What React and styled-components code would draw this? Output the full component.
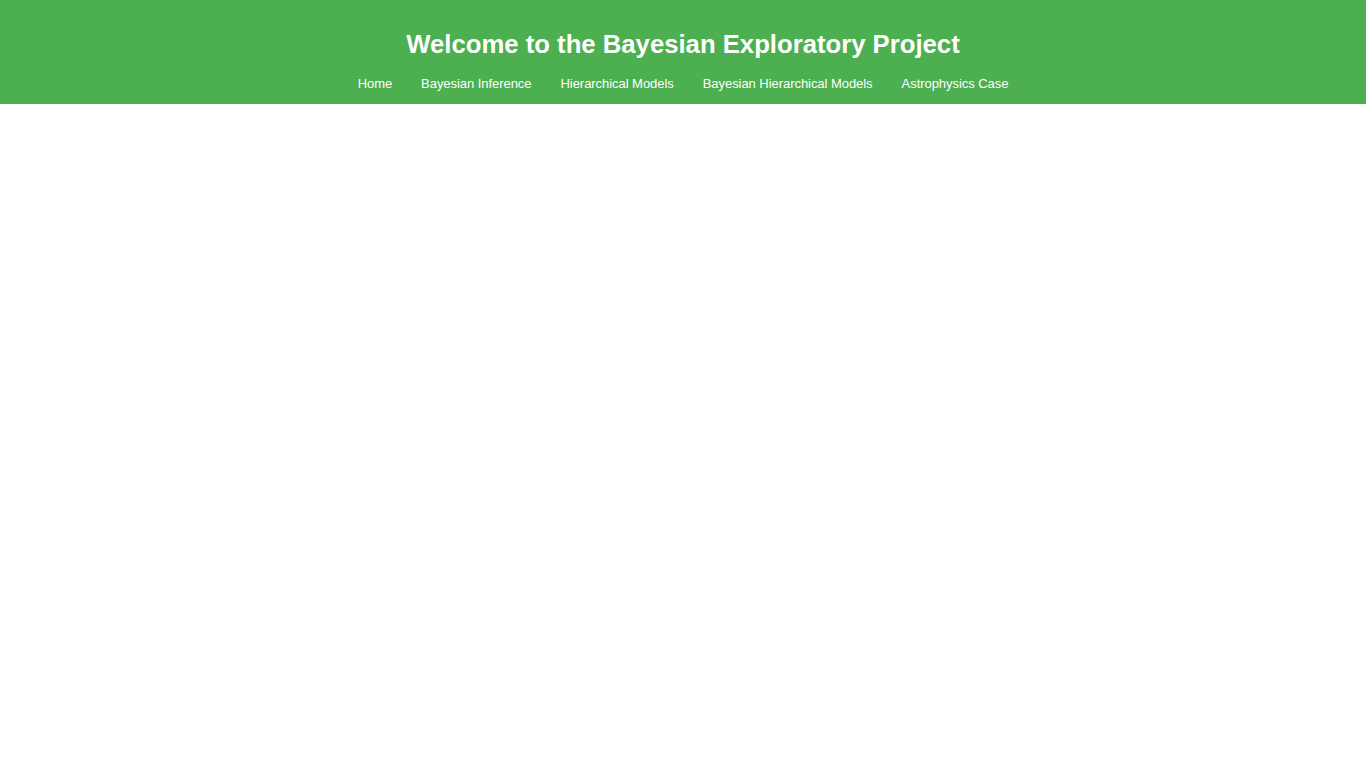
import React from "react";
import styled, { createGlobalStyle } from "styled-components";

const GlobalStyle = createGlobalStyle`
  body {
    margin: 0;
    font-family: "Liberation Sans", Arial, sans-serif;
    background: #fff;
  }
`;

const links = [
  "Home",
  "Bayesian Inference",
  "Hierarchical Models",
  "Bayesian Hierarchical Models",
  "Astrophysics Case",
];

export default function App() {
  return (
    <>
      <GlobalStyle />
      <Header>
        <Title>Welcome to the Bayesian Exploratory Project</Title>
        <Nav>
          {links.map((l) => (
            <NavLink key={l} href="#">
              {l}
            </NavLink>
          ))}
        </Nav>
      </Header>
    </>
  );
}

const Header = styled.header`
  background-color: #4caf50;
  color: #fff;
  height: 104px;
  box-sizing: border-box;
  padding-top: 28px;
  display: flex;
  flex-direction: column;
  align-items: center;
`;

const Title = styled.h1`
  margin: 0;
  font-size: 25.7px;
  font-weight: bold;
  line-height: 32px;
`;

const Nav = styled.nav`
  display: flex;
  gap: 29px;
  margin-top: 16px;
`;

const NavLink = styled.a`
  color: #fff;
  text-decoration: none;
  font-size: 13px;
  letter-spacing: -0.05px;
  line-height: 16px;
`;
